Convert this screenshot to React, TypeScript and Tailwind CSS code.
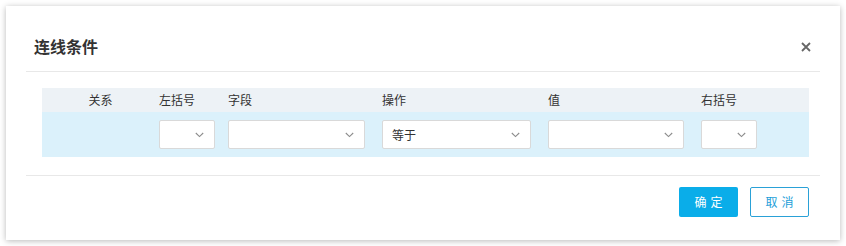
import React from "react";

function Chevron() {
  return (
    <svg width="9" height="6" viewBox="0 0 9 6" className="shrink-0">
      <path d="M0.8 1 L4.5 4.6 L8.2 1" fill="none" stroke="#8c8c8c" strokeWidth="1.1" />
    </svg>
  );
}

function Select({ w, value }: { w: string; value?: string }) {
  return (
    <div
      className={`${w} h-[29px] bg-white border border-[#d9d9d9] rounded-[2px] flex items-center justify-between pl-[9px] pr-[10px] text-[12px] text-[#333]`}
    >
      <span>{value ?? ""}</span>
      <Chevron />
    </div>
  );
}

export default function App() {
  const font = { fontFamily: '"Noto Sans CJK SC", "Noto Sans", sans-serif' };
  return (
    <div className="w-[846px] h-[246px] bg-white p-[6px]" style={font}>
      <div className="w-[834px] h-[234px] bg-white shadow-[0_1px_6px_rgba(0,0,0,0.28)] flex flex-col">
        <div className="h-[65px] flex items-start justify-between pl-[28px] pr-[29px] pt-[29px]">
          <div className="text-[16px] leading-[22px] font-bold text-[#333]">连线条件</div>
          <svg width="10" height="10" viewBox="0 0 10 10" className="mt-[7px]">
            <path d="M1 1 L9 9 M9 1 L1 9" stroke="#666" strokeWidth="1.8" />
          </svg>
        </div>
        <div className="mx-5 h-px bg-[#e8e8e8]" />
        <div className="ml-[36px] mr-[31px] mt-[16px]">
          <div className="h-[24px] bg-[#edf2f6] flex items-center text-[12px] text-[#333]">
            <div className="w-[117px] text-center">关系</div>
            <div className="w-[69px]">左括号</div>
            <div className="w-[154px]">字段</div>
            <div className="w-[166px]">操作</div>
            <div className="w-[153px]">值</div>
            <div className="flex-1">右括号</div>
          </div>
          <div className="h-[45px] bg-[#dbf1fb] flex items-center">
            <div className="w-[117px]" />
            <div className="w-[69px]"><Select w="w-[56px]" /></div>
            <div className="w-[154px]"><Select w="w-[137px]" /></div>
            <div className="w-[166px]"><Select w="w-[149px]" value="等于" /></div>
            <div className="w-[153px]"><Select w="w-[136px]" /></div>
            <div className="flex-1"><Select w="w-[56px]" /></div>
          </div>
        </div>
        <div className="mx-5 mt-[18px] h-px bg-[#e8e8e8]" />
        <div className="flex justify-end gap-[12px] mr-[31px] mt-[11px]">
          <div className="w-[59px] h-[30px] rounded-[2px] bg-[#0aade9] text-white text-[12px] flex items-center justify-center tracking-[4px] pl-[4px]">
            确定
          </div>
          <div className="w-[59px] h-[30px] rounded-[2px] bg-white border border-[#2aa1d7] text-[#1d9ed8] text-[12px] flex items-center justify-center tracking-[4px] pl-[4px]">
            取消
          </div>
        </div>
      </div>
    </div>
  );
}
